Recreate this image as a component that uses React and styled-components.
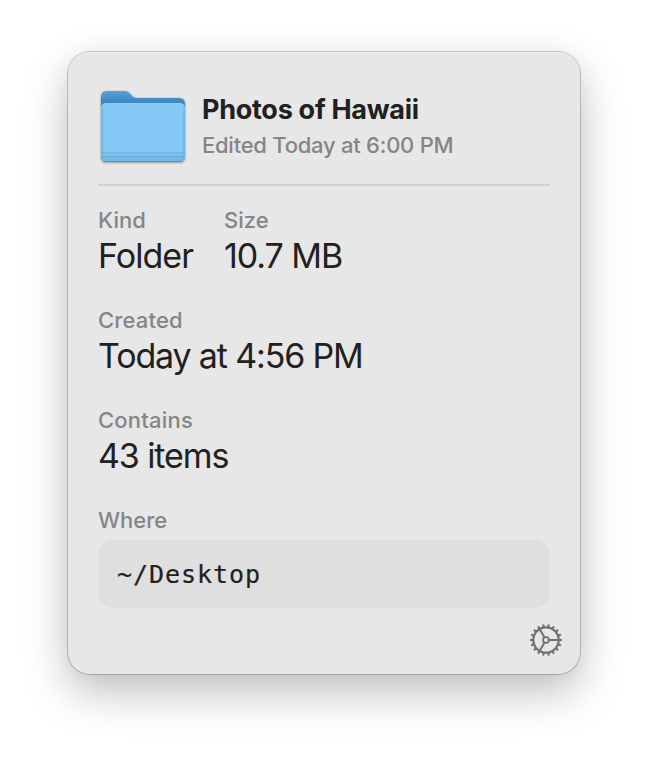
import React from "react";
import styled, { createGlobalStyle } from "styled-components";

const GlobalStyle = createGlobalStyle`
  * { box-sizing: border-box; }
  body { margin: 0; background: #fff; font-family: Inter, "Liberation Sans", sans-serif; }
`;

const Desktop = styled.main`
  width: 648px;
  height: 758px;
  overflow: hidden;
  padding: 52px 68px;
`;

const Card = styled.section`
  width: 512px;
  height: 622px;
  display: flex;
  flex-direction: column;
  padding: 30px 30px 0;
  border-radius: 22px;
  background: #e7e7e7;
  box-shadow:
    inset 0 1px 0 rgba(255, 255, 255, 0.4),
    0 0 0 1px rgba(0, 0, 0, 0.2),
    0 18px 44px rgba(0, 0, 0, 0.25),
    0 0 26px rgba(0, 0, 0, 0.03);
`;

const Header = styled.header`
  height: 104px;
  display: flex;
  align-items: flex-start;
  border-bottom: 2px solid #d0d0d0;
`;

const FolderArt = styled.svg`
  flex: none;
  width: 90px;
  height: 90px;
`;

const Heading = styled.div`
  padding: 11px 0 0 14px;
`;

const Title = styled.h1`
  margin: 0;
  font-size: 27px;
  font-weight: 650;
  line-height: 34px;
  letter-spacing: ${(p) => p.$tracking}px;
  color: #212121;
  white-space: nowrap;
`;

const Label = styled.div`
  font-size: 22px;
  font-weight: 500;
  line-height: 28px;
  letter-spacing: ${(p) => p.$tracking}px;
  color: #858585;
  white-space: nowrap;
`;

const Subtitle = styled(Label)`
  margin-top: 4px;
`;

const Value = styled.div`
  margin-top: 2px;
  font-size: 34px;
  line-height: 40px;
  letter-spacing: ${(p) => p.$tracking}px;
  color: #212121;
  white-space: nowrap;
`;

const Details = styled.div`
  display: grid;
  grid-template-columns: 126px 1fr;
  grid-auto-rows: 100px;
  padding-top: 20px;
`;

const Field = styled.div`
  grid-column: ${(p) => (p.$wide ? "1 / -1" : "auto")};
`;

const Path = styled.div`
  height: 68px;
  margin-top: 6px;
  padding: 0 19px;
  border-radius: 15px;
  background: #dfdfdf;
  color: #212121;
  font-family: "DejaVu Sans Mono", monospace;
  font-size: 25px;
  line-height: 69px;
  letter-spacing: 0.95px;
  -webkit-text-stroke: 0.2px #212121;
`;

const Footer = styled.footer`
  display: flex;
  justify-content: flex-end;
  margin: 18px -12px 0 0;
`;

const GearButton = styled.button`
  width: 32px;
  height: 32px;
  padding: 0;
  border: 0;
  background: none;
  svg { display: block; }
`;

function Folder() {
  return (
    <FolderArt viewBox="0 0 90 90" aria-label="Folder">
      <defs>
        <linearGradient id="back" x2="0" y2="1">
          <stop offset="0" stopColor="#58a2d7" />
          <stop offset="0.14" stopColor="#3f87c3" />
          <stop offset="1" stopColor="#559fd0" />
        </linearGradient>
        <linearGradient id="front" x2="0" y2="1">
          <stop offset="0" stopColor="#83c7f2" />
          <stop offset="0.1" stopColor="#85caf6" />
          <stop offset="1" stopColor="#83c9f7" />
        </linearGradient>
        <filter id="shade" x="-10%" y="-10%" width="120%" height="120%">
          <feDropShadow dx="0" dy="0.7" stdDeviation="0.9" floodOpacity="0.4" />
        </filter>
        <filter id="edgeGlow" filterUnits="userSpaceOnUse" x="0" y="15" width="90" height="70">
          <feGaussianBlur stdDeviation="1.1" />
        </filter>
        <clipPath id="frontClip">
          <path d="M3 26Q3 21 9 21H81Q87 21 87 26V75Q87 80 82 80H8Q3 80 3 75Z" />
        </clipPath>
      </defs>
      <g filter="url(#shade)">
        <path d="M3 15Q3 9 9 9H26C33 9 33 16 39 16H81Q87 16 87 22V75Q87 80 82 80H8Q3 80 3 75Z" fill="url(#back)" />
      </g>
      <g clipPath="url(#frontClip)">
        <path d="M3 20H87V80H3Z" fill="url(#front)" />
        <path d="M3 70H87V72H3Z" fill="#75b8e4" />
        <path d="M3 72H87V74H3Z" fill="#7ec2ef" />
        <path d="M3 74H87V75H3Z" fill="#68abd9" />
        <path d="M3 75H87V80H3Z" fill="#74b8e5" />
        <path d="M3.5 24V76M86.5 24V76" stroke="#5fa3d2" strokeWidth="1.5" filter="url(#edgeGlow)" />
        <path d="M3 79.5H87" stroke="#5494bf" />
      </g>
      <path d="M4 25Q5 21.5 9 21.5H81Q85 21.5 86 25" fill="none" stroke="#91cdf2" strokeWidth="0.8" />
    </FolderArt>
  );
}

function Gear() {
  const teeth = Array.from({ length: 18 }, (_, i) => i * 20 + 10);
  return (
    <svg width="32" height="32" viewBox="-16 -16 32 32" fill="none" stroke="#707070">
      {teeth.map((a) => (
        <path key={a} d="M-1.2 -13L-0.9 -15.9H0.9L1.2 -13Z" fill="#707070" stroke="none" transform={`rotate(${a})`} />
      ))}
      <circle r="12.7" strokeWidth="2.2" />
      <circle r="2.9" strokeWidth="1.7" />
      {[90, 210, 330].map((a) => (
        <path key={a} d="M0 -3.5V-12.5" strokeWidth="2" transform={`rotate(${a})`} />
      ))}
    </svg>
  );
}

export default function App() {
  return (
    <Desktop>
      <GlobalStyle />
      <Card>
        <Header>
          <Folder />
          <Heading>
            <Title $tracking={-0.28}>Photos of Hawaii</Title>
            <Subtitle $tracking={-0.25}>Edited Today at 6:00 PM</Subtitle>
          </Heading>
        </Header>
        <Details>
          <Field>
            <Label $tracking={0}>Kind</Label>
            <Value $tracking={-0.95}>Folder</Value>
          </Field>
          <Field>
            <Label $tracking={0}>Size</Label>
            <Value $tracking={-1.05}>10.7 MB</Value>
          </Field>
          <Field $wide>
            <Label $tracking={0.15}>Created</Label>
            <Value $tracking={-1.15}>Today at 4:56 PM</Value>
          </Field>
          <Field $wide>
            <Label $tracking={0.2}>Contains</Label>
            <Value $tracking={-1.1}>43 items</Value>
          </Field>
          <Field $wide>
            <Label $tracking={0}>Where</Label>
            <Path>~/Desktop</Path>
          </Field>
        </Details>
        <Footer>
          <GearButton aria-label="Settings"><Gear /></GearButton>
        </Footer>
      </Card>
    </Desktop>
  );
}
